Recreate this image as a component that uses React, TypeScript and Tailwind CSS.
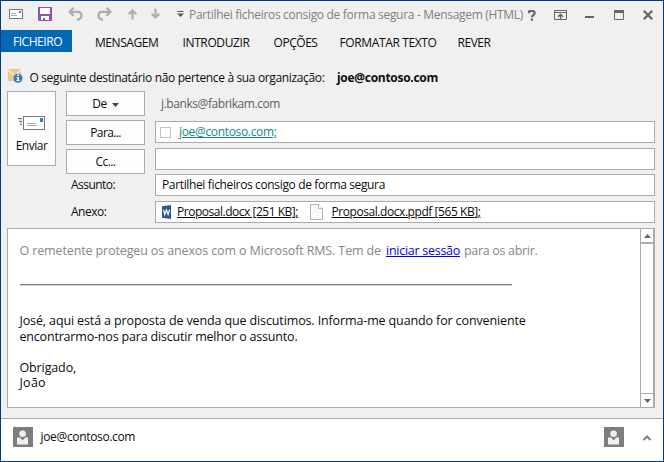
import type { ReactNode } from 'react';

function EnvelopeIcon() {
  return (
    <svg width="14" height="10" viewBox="0 0 14 10" fill="none">
      <rect x="0.5" y="0.5" width="13" height="9" fill="#fff" stroke="#777" />
      <path d="M2 4.5h5M2 6.5h6" stroke="#aaa" />
      <path d="M10 2h2v2h-2z" fill="#3f7cb8" />
    </svg>
  );
}

function SaveIcon() {
  return (
    <svg width="14" height="14" viewBox="0 0 14 14">
      <path d="M0 0h14v14H1l-1-1z" fill="#8a55ab" />
      <path d="M2 1h10v6H2z" fill="#fff" />
      <path d="M3 9h8v4H3z" fill="#fff" />
      <path d="M5 11h2v2H5z" fill="#8a55ab" />
    </svg>
  );
}

function UndoIcon({ flip = false }: { flip?: boolean }) {
  return (
    <svg width="15" height="14" viewBox="0 0 15 14" fill="none" stroke="#adadad" strokeWidth="2.3" className={flip ? '-scale-x-100' : ''}>
      <path d="M5.5 0.8L1.7 4.8l3.8 4" />
      <path d="M2 4.8h7.6c2.5 0 3.9 1.6 3.9 3.7 0 2.2-1.6 3.8-4.5 4.3" />
    </svg>
  );
}

function ArrowIcon({ down = false }: { down?: boolean }) {
  return (
    <svg width="9" height="11" viewBox="0 0 9 11" fill="none" stroke="#adadad" strokeWidth="2.1" className={down ? 'rotate-180' : ''}>
      <path d="M4.5 10.5V1.5M0.7 5.3L4.5 1.5l3.8 3.8" />
    </svg>
  );
}

function MailTipIcon() {
  return (
    <svg className="mt-[2px]" width="15" height="15" viewBox="0 0 15 15">
      <path d="M0 0h13v12H0z" fill="#edc787" />
      <path d="M0 1l6.5 5.5L13 1" fill="none" stroke="#fbf3e3" strokeWidth="1.2" />
      <circle cx="9.9" cy="9.2" r="4.9" fill="#3f79b7" stroke="#e6eef6" strokeWidth="0.6" />
      <path d="M9.2 5.6h1.8v1.5H9.2zM8.6 8h2.3v3h.8v1H8.5v-1h.8V9h-.7z" fill="#fff" />
    </svg>
  );
}

function SendIcon() {
  return (
    <svg width="28" height="14" viewBox="0 0 28 14" fill="none">
      <path d="M0 2.5h4M1 5.5h3M2 8.5h2" stroke="#777" />
      <path d="M1 4h3M2 7h2" stroke="#bbb" />
      <rect x="5.5" y="0.5" width="21" height="13" fill="#fff" stroke="#777" />
      <path d="M9 7.5h9M9 9.5h10" stroke="#aaa" />
      <path d="M22 2h3v4h-3z" fill="#3f7cb8" />
    </svg>
  );
}

function WordIcon() {
  return (
    <svg width="10" height="14" viewBox="0 0 10 14">
      <path d="M0 1.3L9 0v14L0 12.7z" fill="#2b579a" />
      <path d="M1.6 4.6l1.1 4.8L4.5 5l1.6 4.4L7.6 4.6" fill="none" stroke="#fff" strokeWidth="1.2" />
    </svg>
  );
}

function FileIcon() {
  return (
    <svg width="14" height="16" viewBox="0 0 14 16">
      <path d="M0.5 0.5h8l4 4v11h-12z" fill="#fbf7f6" stroke="#b5b0b0" />
      <path d="M8.5 0.5v4h4" fill="#fff" stroke="#b5b0b0" />
    </svg>
  );
}

function PersonIcon() {
  return (
    <svg width="20" height="20" viewBox="0 0 20 20">
      <path d="M0 0h20v20H0z" fill="#7d7d7d" />
      <circle cx="9.6" cy="6.7" r="3.3" fill="#f0f0f0" />
      <path d="M4 10.5h3l2.6 3 2.6-3H15V17.5H4z" fill="#f0f0f0" />
    </svg>
  );
}

function Field({ className = '', children }: { className?: string; children?: ReactNode }) {
  return (
    <div className={`flex h-[22px] w-[500px] items-center whitespace-nowrap border border-[#ababab] bg-white ${className}`}>
      {children}
    </div>
  );
}

function FieldButton({ className = '', children }: { className?: string; children: ReactNode }) {
  return (
    <button className={`flex h-[25px] w-[79px] items-center justify-center border border-[#ababab] bg-[#fdfdfd] ${className}`}>
      {children}
    </button>
  );
}

export default function App() {
  return (
    <div className="flex h-[462px] w-[664px] flex-col overflow-hidden whitespace-nowrap border border-[#003a80] bg-[#f0f0f0] font-['Open_Sans','Noto_Sans',sans-serif] text-[12px] leading-[16px] text-[#0c0c0c]">
      <header className="flex h-[29px] items-start">
        <div className="flex h-[26px] w-[188px] shrink-0 items-center pl-2">
          <EnvelopeIcon />
          <span className="ml-[15px] -mt-px"><SaveIcon /></span>
          <span className="ml-4"><UndoIcon /></span>
          <span className="ml-[14px]"><UndoIcon flip /></span>
          <span className="ml-4"><ArrowIcon /></span>
          <span className="ml-[14px] -mt-px"><ArrowIcon down /></span>
          <svg className="ml-[17px] -mt-px" width="7" height="6" viewBox="0 0 7 6">
            <path d="M0.5 0h6v1h-6zM0 2.5h7L3.5 6z" fill="#555" />
          </svg>
        </div>
        <h1 className="w-[337px] pt-[6px] tracking-[-0.308px] text-[#808080]">
          Partilhei ficheiros consigo de forma segura - Mensagem (HTML)
        </h1>
        <div className="flex h-[28px] items-center">
          <svg className="ml-[2px]" width="8" height="11" viewBox="0 0 8 11">
            <path d="M1 3.2V1.5C2.5 0.6 6.7 0.3 6.7 3c0 2-2.7 1.9-2.7 4.2M3.9 8.6v2.2" fill="none" stroke="#666" strokeWidth="2.2" />
          </svg>
          <svg className="ml-[18px]" width="13" height="10" viewBox="0 0 13 10" fill="none" stroke="#666">
            <path d="M0.5 0.5h12v9h-12zM0.5 2.5h12" />
            <path d="M6.5 9V4.5M4 6.8l2.5-2.5L9 6.8" strokeWidth="1.4" />
          </svg>
          <svg className="ml-[18px]" width="9" height="10" viewBox="0 0 9 10">
            <path d="M0 6h9v2H0z" fill="#666" />
          </svg>
          <svg className="ml-5" width="10" height="10" viewBox="0 0 10 10">
            <path d="M0.5 0.5h9v9h-9z" fill="none" stroke="#666" />
            <path d="M0 0h10v3H0z" fill="#666" />
          </svg>
          <svg className="ml-[19px]" width="10" height="10" viewBox="0 0 10 10">
            <path d="M0.8 0.8l8.4 8.4M9.2 0.8L0.8 9.2" stroke="#666" strokeWidth="2.2" />
          </svg>
        </div>
      </header>

      <nav className="flex h-[22px]">
        <span className="flex h-[22px] w-[71px] items-center bg-[#0368b4] pl-3 pt-px tracking-[-0.46px] text-white">FICHEIRO</span>
        <span className="w-[88px] pl-[23px] pt-[5px] tracking-[-0.43px]">MENSAGEM</span>
        <span className="w-[94px] pl-[22.5px] pt-[5px] tracking-[-0.38px]">INTRODUZIR</span>
        <span className="w-[65px] pl-[19.5px] pt-[5px] tracking-[-0.45px]">OPÇÕES</span>
        <span className="w-[119px] pl-[20.5px] pt-[5px] tracking-[-0.37px]">FORMATAR TEXTO</span>
        <span className="pl-[19.5px] pt-[5px] tracking-[-0.46px]">REVER</span>
      </nav>

      <div className="flex h-[39px] items-start pl-[7px] pt-[15px]">
        <MailTipIcon />
        <p className="ml-[6.5px] mt-[3px] w-[307.5px] tracking-[-0.353px]">O seguinte destinatário não pertence à sua organização:</p>
        <b className="mt-[3px] tracking-[-0.29px]">joe@contoso.com</b>
      </div>

      <section className="flex h-[137px] items-start pl-[6px]">
        <button className="flex h-[75px] w-[49px] flex-col items-center border border-[#ababab] bg-[#fdfdfd] pt-6">
          <SendIcon />
          <span className="mt-2 tracking-[-0.5px]">Enviar</span>
        </button>
        <div className="ml-[10px] flex w-[89px] flex-col">
          <FieldButton>
            <span className="pt-px tracking-[-0.5px]">De</span>
            <svg className="ml-[5px] mt-[2px]" width="7" height="4" viewBox="0 0 7 4"><path d="M0 0h7L3.5 4z" fill="#444" /></svg>
          </FieldButton>
          <FieldButton className="mt-1"><span className="tracking-[-0.64px]">Para...</span></FieldButton>
          <FieldButton className="mt-1"><span className="tracking-[-0.6px]">Cc...</span></FieldButton>
          <span className="ml-[5px] mt-[3px] tracking-[-0.55px]">Assunto:</span>
          <span className="ml-[5px] mt-[11px] tracking-[-0.5px]">Anexo:</span>
        </div>
        <div className="flex flex-col">
          <span className="ml-[6px] mt-[5px] h-[25px] tracking-[-0.43px] text-[#606060]">j.banks@fabrikam.com</span>
          <Field className="pl-1">
            <span className="h-[11px] w-[11px] border border-[#c4c4c4] bg-white" />
            <span className="ml-2 tracking-[-0.33px] text-[#168a84] underline decoration-1 underline-offset-1">joe@contoso.com;</span>
          </Field>
          <Field className="mt-[5px]" />
          <Field className="mt-1 pl-[6px]">
            <span className="tracking-[-0.358px]">Partilhei ficheiros consigo de forma segura</span>
          </Field>
          <Field className="mt-[5px] pl-[6px]">
            <WordIcon />
            <span className="ml-[5px] w-[133px] tracking-[-0.478px] underline decoration-1 underline-offset-1">Proposal.docx [251 KB];</span>
            <FileIcon />
            <span className="ml-[7.5px] tracking-[-0.436px] underline decoration-1 underline-offset-1">Proposal.docx.ppdf [565 KB];</span>
          </Field>
        </div>
      </section>

      <main className="ml-[6px] flex h-[180px] w-[648px] border border-r-2 border-[#ababab] bg-white">
        <article className="w-[632px] pl-[11.5px] pt-[14px] text-[12.5px] tracking-[-0.127px]">
          <p className="text-[#868686]">
            <span className="inline-block w-[366.5px]">O remetente protegeu os anexos com o Microsoft RMS. Tem de</span>
            <a className="tracking-[-0.27px] text-[#0000ee] underline decoration-1 underline-offset-1">iniciar sessão</a>
            <span className="ml-1 tracking-[-0.32px]">para os abrir.</span>
          </p>
          <hr className="mt-[25px] h-[2px] w-[492.4px] border-t border-b border-t-[#7c7c7c] border-b-[#d5d2c8]" />
          <div className="mt-[27px] leading-[15.6px]">
            <p>José, aqui está a proposta de venda que discutimos. Informa-me quando for conveniente</p>
            <p className="tracking-[-0.187px]">encontrarmo-nos para discutir melhor o assunto.</p>
            <p className="mt-[15.6px]">Obrigado,</p>
            <p className="tracking-[0.25px]">João</p>
          </div>
        </article>
        <div className="flex w-[13px] flex-col justify-between border-l border-[#ababab]">
          <span className="flex h-[15px] items-center justify-center border-b-2 border-[#ababab]">
            <svg width="7" height="4" viewBox="0 0 7 4"><path d="M0 4h7L3.5 0z" fill="#666" /></svg>
          </span>
          <span className="flex h-[14px] items-center justify-center border-t border-[#ababab]">
            <svg width="7" height="4" viewBox="0 0 7 4"><path d="M0 0h7L3.5 4z" fill="#666" /></svg>
          </span>
        </div>
      </main>

      <footer className="mt-[10px] flex h-[43px] items-start border-t border-[#ababab] bg-white pl-3 pt-2">
        <PersonIcon />
        <span className="ml-[7.5px] mt-[2px] w-[563.5px] tracking-[-0.34px]">joe@contoso.com</span>
        <PersonIcon />
        <svg className="ml-[19px] mt-[8px]" width="8" height="6" viewBox="0 0 8 6" fill="none" stroke="#808080" strokeWidth="2">
          <path d="M0.5 5L4 1.5 7.5 5" />
        </svg>
      </footer>
    </div>
  );
}
